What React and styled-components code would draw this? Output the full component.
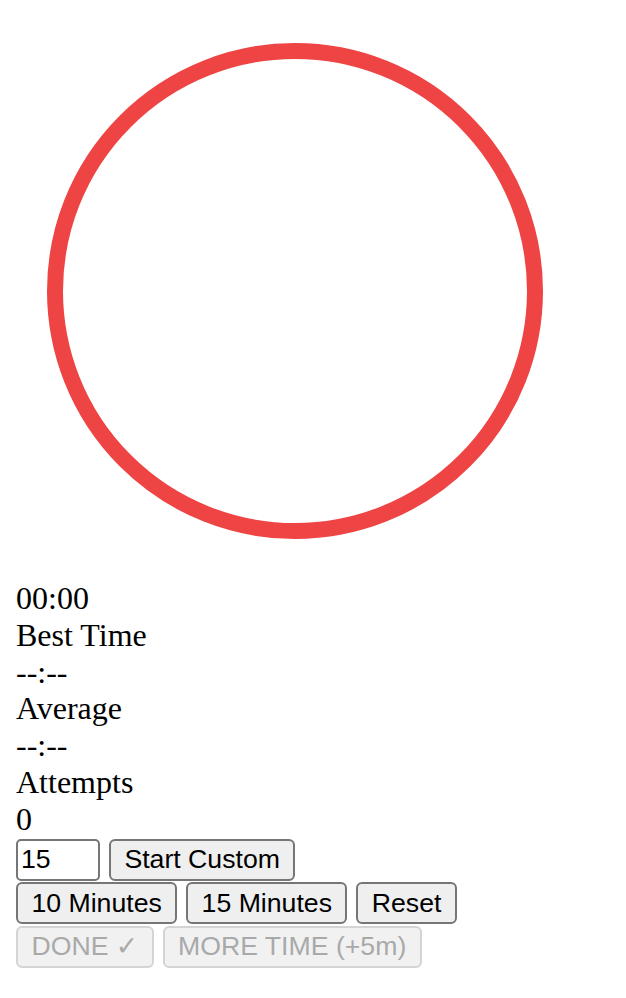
import React from "react";
import styled, { createGlobalStyle } from "styled-components";

const GlobalStyle = createGlobalStyle`
  html, body { background: #ffffff; }
  body {
    margin: 16px;
    font-family: "Liberation Serif", "Times New Roman", serif;
    font-size: 32px;
    color: #000000;
  }
`;

const Page = styled.div`
  display: flex;
  flex-direction: column;
`;

const Stage = styled.div`
  display: flex;
  padding: 27px 0 41px 31px;
`;

const Ring = styled.svg`
  display: block;
  width: 496px;
  height: 496px;
`;

const Stats = styled.div`
  display: flex;
  flex-direction: column;
  line-height: 36.8px;
`;

const Line = styled.div``;

const Controls = styled.div`
  display: flex;
  flex-direction: column;
  gap: 1.5px;
  margin-top: 1px;
`;

const Row = styled.div`
  display: flex;
  gap: 9px;
  align-items: center;
`;

const NumberInput = styled.input`
  box-sizing: border-box;
  width: 84px;
  height: 42px;
  padding: 2px 3px;
  border: 2px solid #767676;
  border-radius: 5px;
  background: #ffffff;
  font-family: "Liberation Sans", Arial, sans-serif;
  font-size: 26.67px;
  color: #000000;
  outline: none;
`;

const Button = styled.button`
  box-sizing: border-box;
  height: 42px;
  padding: 0 13.4px;
  border: 2px solid ${(p) => (p.disabled ? "#d4d4d4" : "#767676")};
  border-radius: 6px;
  background: ${(p) => (p.disabled ? "#f1f1f1" : "#efefef")};
  color: ${(p) => (p.disabled ? "#a9a9a9" : "#000000")};
  font-family: "Liberation Sans", Arial, "DejaVu Sans", sans-serif;
  font-size: 26.67px;
  line-height: 1;
  white-space: nowrap;
  cursor: default;
`;

export default function App() {
  return (
    <>
      <GlobalStyle />
      <Page>
        <Stage>
          <Ring viewBox="0 0 496 496">
            <circle cx="248" cy="248" r="240" fill="none" stroke="#ef4444" strokeWidth="16" />
          </Ring>
        </Stage>
        <Stats>
          <Line>00:00</Line>
          <Line>Best Time</Line>
          <Line>--:--</Line>
          <Line>Average</Line>
          <Line>--:--</Line>
          <Line>Attempts</Line>
          <Line>0</Line>
        </Stats>
        <Controls>
          <Row>
            <NumberInput type="number" defaultValue="15" />
            <Button>Start Custom</Button>
          </Row>
          <Row>
            <Button>10 Minutes</Button>
            <Button>15 Minutes</Button>
            <Button>Reset</Button>
          </Row>
          <Row>
            <Button disabled>DONE ✓</Button>
            <Button disabled>MORE TIME (+5m)</Button>
          </Row>
        </Controls>
      </Page>
    </>
  );
}
